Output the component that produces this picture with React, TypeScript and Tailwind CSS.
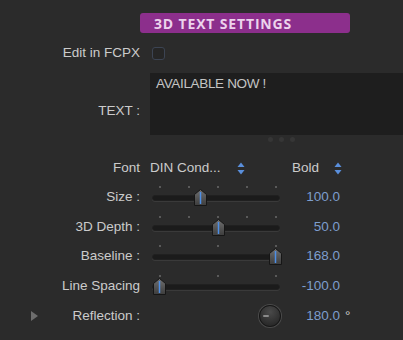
import React from "react";

type SliderProps = {
  label: string;
  value: string;
  thumb: number;
  ticks: number[];
};

const TICKS5 = [9, 38, 67, 96, 125];
const TICKS3 = [9, 67, 125];

const Stepper = () => (
  <svg width="8" height="13" viewBox="0 0 8 13">
    <polygon points="4,0.5 7.5,5 0.5,5" fill="#5a8fdc" />
    <polygon points="4,12.5 7.5,8 0.5,8" fill="#5a8fdc" />
  </svg>
);

const Thumb = () => (
  <svg width="13" height="17" viewBox="0 0 13 17">
    <defs>
      <linearGradient id="tg" x1="0" y1="0" x2="0" y2="1">
        <stop offset="0" stopColor="#6f6f6f" />
        <stop offset="1" stopColor="#3d3d3d" />
      </linearGradient>
    </defs>
    <polygon points="6.5,0.5 12.5,5.5 12.5,16.5 0.5,16.5 0.5,5.5" fill="url(#tg)" stroke="#161616" />
    <line x1="6.5" y1="3" x2="6.5" y2="15" stroke="#4d8fe6" strokeWidth="1.5" />
  </svg>
);

const SliderRow = ({ label, value, thumb, ticks }: SliderProps) => (
  <div className="flex h-[30px] items-center">
    <div className="w-[140px] text-right">{label}</div>
    <div className="relative ml-[10px] h-[30px] w-[132px]">
      {ticks.map((t) => (
        <div key={t} className="absolute top-[4px] h-[2px] w-[2px] bg-[#5a5a5a]" style={{ left: t }} />
      ))}
      <div className="absolute left-[2px] top-[13px] h-[6px] w-[128px] rounded-full border border-[#202020] bg-[#1b1b1b] shadow-[0_1px_0_#3a3a3a]" />
      <div className="absolute top-[7px]" style={{ left: thumb }}>
        <Thumb />
      </div>
    </div>
    <div className="w-[58px] text-right text-[#7d9dcd]">{value}</div>
  </div>
);

export default function App() {
  return (
    <div
      className="h-[340px] w-[403px] overflow-hidden bg-[#2b2b2b] pt-[13px] text-[13.5px] text-[#cbcbcb]"
      style={{ fontFamily: '"Liberation Sans", Arial, sans-serif' }}
    >
      <div className="ml-[140px] flex h-[20px] w-[210px] items-center rounded-[3px] bg-[#8c2f8c] pl-[14px]">
        <span
          className="text-[14px] font-bold tracking-[0.06em] text-[#ecd3ec]"
          style={{ fontFamily: '"Open Sans", sans-serif' }}
        >
          3D TEXT SETTINGS
        </span>
      </div>

      <div className="flex h-[40px] items-center">
        <div className="w-[140px] text-right">Edit in FCPX</div>
        <div className="ml-[12px] h-[13px] w-[13px] rounded-[3px] border border-[#3c4453] bg-[#262626]" />
      </div>

      <div className="flex h-[62px]">
        <div className="mt-[30px] w-[140px] text-right leading-[15px]">TEXT :</div>
        <div className="ml-[10px] flex-1 bg-[#1e1e1e] px-[6px] pt-[1px] text-[13.5px] tracking-tight text-[#c4c4c4]">
          AVAILABLE NOW !
        </div>
      </div>

      <div className="flex h-[20px] gap-[6px] pl-[268px] pt-[2px]">
        <div className="h-[5px] w-[5px] rounded-full bg-[#363636]" />
        <div className="h-[5px] w-[5px] rounded-full bg-[#363636]" />
        <div className="h-[5px] w-[5px] rounded-full bg-[#363636]" />
      </div>

      <div className="flex h-[27px] items-center">
        <div className="w-[140px] text-right">Font</div>
        <div className="ml-[10px] w-[87px]">DIN Cond...</div>
        <Stepper />
        <div className="ml-[47px] w-[42px]">Bold</div>
        <Stepper />
      </div>

      <SliderRow label="Size :" value="100.0" thumb={44} ticks={TICKS5} />
      <SliderRow label="3D Depth :" value="50.0" thumb={62} ticks={TICKS5} />
      <div className="-mt-[1px]">
        <SliderRow label="Baseline :" value="168.0" thumb={119} ticks={TICKS3} />
      </div>
      <SliderRow label="Line Spacing" value="-100.0" thumb={3} ticks={TICKS3} />

      <div className="flex h-[30px] items-center">
        <div className="flex w-[140px] items-center">
          <svg width="7" height="10" viewBox="0 0 7 10" className="ml-[31px]">
            <polygon points="0,0 7,5 0,10" fill="#6d6d6d" />
          </svg>
          <div className="flex-1 text-right">Reflection :</div>
        </div>
        <div className="ml-[10px] flex w-[132px] justify-end pr-[1px]">
          <div className="relative h-[22px] w-[22px] rounded-full border border-[#161616] bg-[radial-gradient(circle_at_50%_30%,#4a4a4a,#2a2a2a_75%)] shadow-[0_0_0_1px_#4a4a4a]">
            <div className="absolute left-[3px] top-[9px] h-[2px] w-[6px] rounded-full bg-[#8a8a8a]" />
          </div>
        </div>
        <div className="w-[58px] text-right text-[#7d9dcd]">180.0</div>
        <div className="ml-[5px] text-[#cbcbcb]">°</div>
      </div>
    </div>
  );
}
